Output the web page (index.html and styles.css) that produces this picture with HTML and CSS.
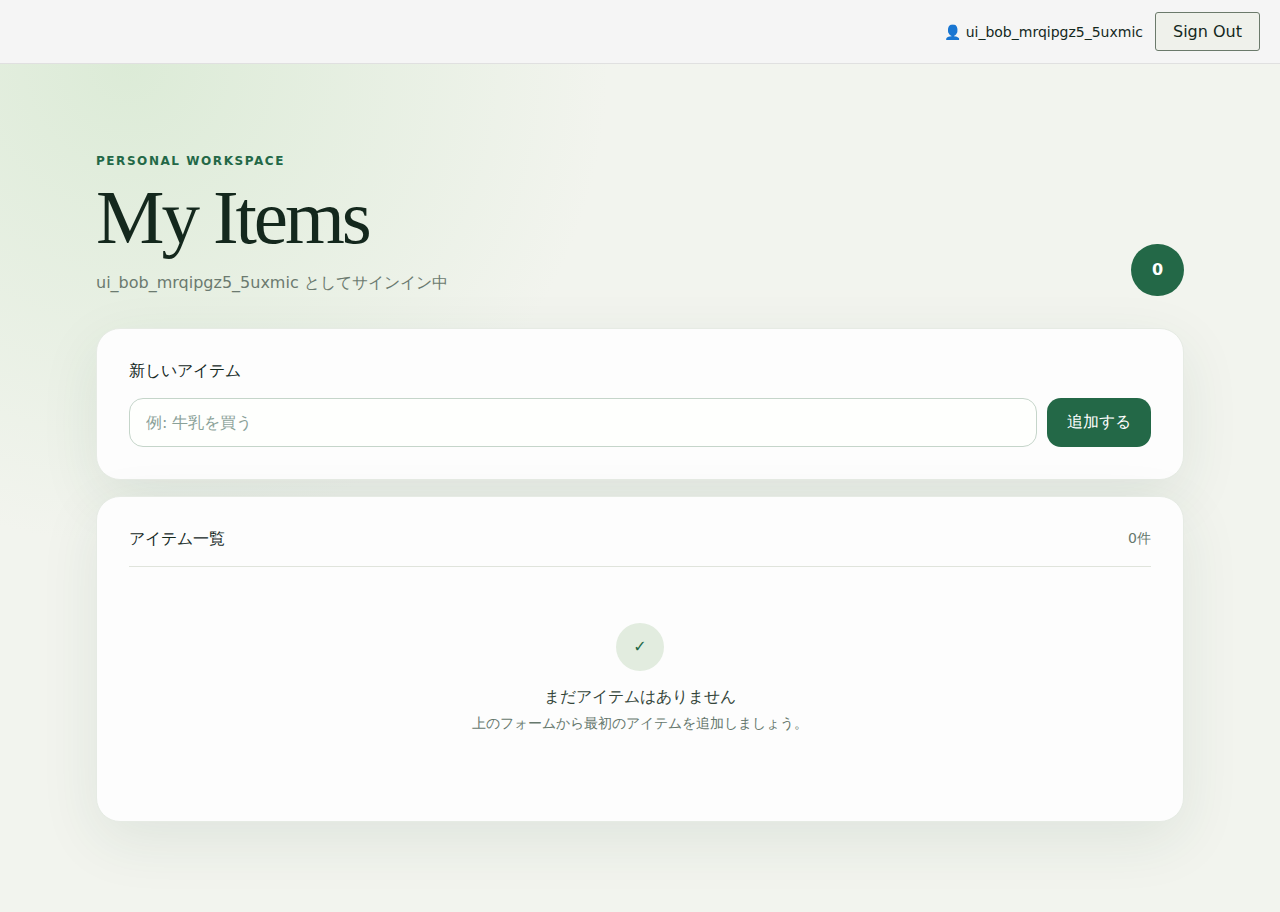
FILE: index.html
```html
<!DOCTYPE html>
<html lang="ja">
<head>
  <meta charset="UTF-8">
  <meta name="viewport" content="width=device-width, initial-scale=1.0">
  <title>My Items</title>
  <link rel="stylesheet" href="styles.css">
</head>
<body>

<header class="topbar">
  <span class="user">👤 ui_bob_mrqipgz5_5uxmic</span>
  <button type="button" class="signout">Sign Out</button>
</header>

<main class="page">
  <div class="container">
    <div class="hero">
      <div>
        <p class="eyebrow">PERSONAL WORKSPACE</p>
        <h1>My Items</h1>
        <p class="lead">ui_bob_mrqipgz5_5uxmic としてサインイン中</p>
      </div>
      <span class="count">0</span>
    </div>

    <form class="card add-form">
      <label for="title">新しいアイテム</label>
      <div class="field-row">
        <input type="text" id="title" placeholder="例: 牛乳を買う">
        <button type="submit" class="add-btn">追加する</button>
      </div>
    </form>

    <section class="card list">
      <div class="list-head">
        <h2>アイテム一覧</h2>
        <span>0件</span>
      </div>
      <div class="empty">
        <span class="check">✓</span>
        <p class="empty-title">まだアイテムはありません</p>
        <p class="empty-text">上のフォームから最初のアイテムを追加しましょう。</p>
      </div>
    </section>
  </div>
</main>

</body>
</html>
```
FILE: styles.css
```css
* {
  box-sizing: border-box;
}
body {
  margin: 0;
  min-height: 100vh;
  display: flex;
  flex-direction: column;
  font-family: "DejaVu Sans", system-ui, sans-serif;
  font-size: 16px;
  background: #f2f4ee;
  color: #14281d;
}
h1, h2, p {
  margin: 0;
  font-weight: normal;
}
input, button {
  font: inherit;
}
.topbar {
  display: flex;
  justify-content: flex-end;
  align-items: center;
  gap: 12px;
  padding: 12px 20px;
  background: #f5f5f5;
  border-bottom: 1px solid #e0e0e0;
}
.user {
  font-size: 14px;
}
.signout {
  padding: 8px 17px;
  line-height: 21px;
  color: #14281d;
  background: #eff1eb;
  border: 1px solid #6b7a6b;
  border-radius: 3px;
  cursor: pointer;
}
.page {
  flex: 1;
  padding: 88px 32px 64px;
  background: radial-gradient(circle at 10% 0, #dcebd7, transparent 480px);
}
.container {
  max-width: 1088px;
  margin: auto;
}
.hero {
  display: flex;
  justify-content: space-between;
  align-items: flex-end;
  margin-bottom: 32px;
}
.eyebrow {
  font-size: 12px;
  line-height: 18px;
  font-weight: bold;
  letter-spacing: 0.13em;
  color: #236847;
}
h1 {
  margin: 8px 0 14px;
  font-family: "Liberation Serif", serif;
  font-size: 77px;
  line-height: 78px;
  letter-spacing: -0.04em;
}
.lead {
  line-height: 26px;
  color: #6b7a6f;
}
.count {
  min-width: 53px;
  line-height: 52px;
  border-radius: 26px;
  text-align: center;
  font-weight: bold;
  color: white;
  background: #236847;
}
.card {
  padding: 32px;
  background: #fdfdfd;
  border: 1px solid #e6ebe4;
  border-radius: 24px;
  box-shadow: 0 18px 60px rgba(31, 78, 52, 0.09);
}
.add-form {
  margin-bottom: 16px;
}
label, h2 {
  display: block;
  font-size: 16px;
  line-height: 20px;
}
.field-row {
  display: flex;
  gap: 10px;
  margin-top: 17px;
}
input {
  flex: 1;
  min-width: 0;
  height: 49px;
  padding: 0 16px;
  color: #14281d;
  background: #fefffd;
  border: 1px solid #c5d5ca;
  border-radius: 14px;
}
input::placeholder {
  color: #8aa198;
}
.add-btn {
  padding: 0 20px;
  color: white;
  background: #236847;
  border: none;
  border-radius: 14px;
  cursor: pointer;
}
.list-head {
  display: flex;
  justify-content: space-between;
  align-items: flex-start;
  padding-bottom: 17px;
  border-bottom: 1px solid #e0e4dc;
}
.list-head span {
  font-size: 14px;
  line-height: 18px;
  color: #66786d;
}
.empty {
  padding: 56px 16px 58px;
  text-align: center;
}
.check {
  display: block;
  width: 48px;
  margin: 0 auto 16px;
  line-height: 48px;
  border-radius: 50%;
  color: #236847;
  background: #e2ecdf;
}
.empty-title {
  line-height: 20px;
  color: #34463b;
}
.empty-text {
  margin-top: 8px;
  font-size: 14px;
  line-height: 16px;
  color: #66786d;
}
```
